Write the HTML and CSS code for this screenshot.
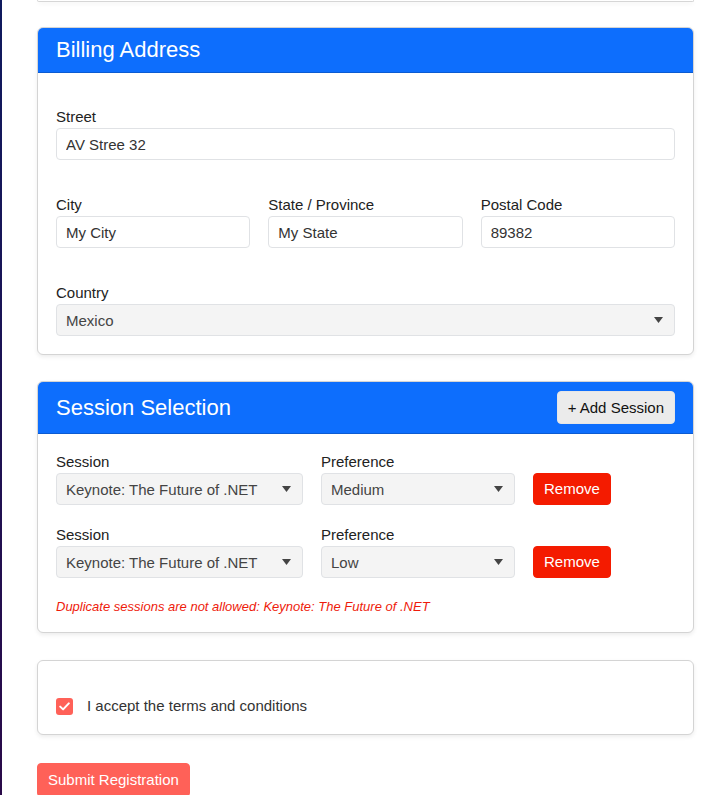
FILE: index.html
```html
<!DOCTYPE html>
<html lang="en">
<head>
<meta charset="utf-8">
<title>Registration</title>
<link rel="stylesheet" href="styles.css">
</head>
<body>
<div class="layout">
  <div class="sidebar"></div>
  <main class="main">
    <div class="card-prev"></div>

    <section class="card">
      <div class="card-header"><h2 class="card-title">Billing Address</h2></div>
      <div class="card-body spaced">
        <div class="field">
          <label class="label" for="street">Street</label>
          <input class="input" id="street" value="AV Stree 32">
        </div>
        <div class="field grid3">
          <div>
            <label class="label" for="city">City</label>
            <input class="input" id="city" value="My City">
          </div>
          <div>
            <label class="label" for="state">State / Province</label>
            <input class="input" id="state" value="My State">
          </div>
          <div>
            <label class="label" for="zip">Postal Code</label>
            <input class="input" id="zip" value="89382">
          </div>
        </div>
        <div class="field">
          <label class="label" for="country">Country</label>
          <div class="select-wrap">
            <select class="select" id="country"><option>Mexico</option></select>
            <svg class="caret" width="9" height="6" viewBox="0 0 9 6"><path d="M0 0H9L4.5 6Z" fill="#444"/></svg>
          </div>
        </div>
      </div>
    </section>

    <section class="card">
      <div class="card-header header-row">
        <h2 class="card-title">Session Selection</h2>
        <button class="btn btn-light" type="button">+ Add Session</button>
      </div>
      <div class="card-body">
        <div class="session-row">
          <div>
            <label class="label">Session</label>
            <div class="select-wrap">
              <select class="select"><option>Keynote: The Future of .NET</option></select>
              <svg class="caret" width="9" height="6" viewBox="0 0 9 6"><path d="M0 0H9L4.5 6Z" fill="#444"/></svg>
            </div>
          </div>
          <div>
            <label class="label">Preference</label>
            <div class="select-wrap">
              <select class="select"><option>Medium</option></select>
              <svg class="caret" width="9" height="6" viewBox="0 0 9 6"><path d="M0 0H9L4.5 6Z" fill="#444"/></svg>
            </div>
          </div>
          <div><button class="btn btn-danger" type="button">Remove</button></div>
        </div>
        <div class="session-row">
          <div>
            <label class="label">Session</label>
            <div class="select-wrap">
              <select class="select"><option>Keynote: The Future of .NET</option></select>
              <svg class="caret" width="9" height="6" viewBox="0 0 9 6"><path d="M0 0H9L4.5 6Z" fill="#444"/></svg>
            </div>
          </div>
          <div>
            <label class="label">Preference</label>
            <div class="select-wrap">
              <select class="select"><option>Low</option></select>
              <svg class="caret" width="9" height="6" viewBox="0 0 9 6"><path d="M0 0H9L4.5 6Z" fill="#444"/></svg>
            </div>
          </div>
          <div><button class="btn btn-danger" type="button">Remove</button></div>
        </div>
        <p class="error">Duplicate sessions are not allowed: Keynote: The Future of .NET</p>
      </div>
    </section>

    <section class="card card-terms">
      <div class="card-body spaced">
        <label class="check">
          <span class="check-box">
            <svg width="11" height="9" viewBox="0 0 11 9"><path d="M1.2 4.6L4.1 7.4L9.8 1.4" fill="none" stroke="#fff" stroke-width="2" stroke-linecap="round" stroke-linejoin="round"/></svg>
          </span>
          <span class="check-text">I accept the terms and conditions</span>
        </label>
      </div>
    </section>

    <button class="btn btn-submit" type="submit">Submit Registration</button>
  </main>
</div>
</body>
</html>
```

FILE: styles.css
```css
* { box-sizing: border-box; }

html, body {
  margin: 0;
  padding: 0;
  background: #fff;
}

body {
  font-family: "Liberation Sans", Arial, Helvetica, sans-serif;
  font-size: 15px;
  line-height: 20px;
  color: #212529;
}

.layout {
  display: flex;
  height: 795px;
  overflow: hidden;
}

.sidebar {
  width: 2px;
  flex: none;
  background: linear-gradient(180deg, #0f1a5e 0%, #2a0a49 100%);
}

.main {
  flex: 1;
  padding: 0 26px 0 35px;
  min-width: 0;
}

.card-prev {
  height: 2px;
  border: 1px solid #d6d6d6;
  border-top: 0;
  border-radius: 0 0 6px 6px;
  box-shadow: 0 2px 4px rgba(0, 0, 0, 0.06);
  margin-bottom: 25px;
}

.card {
  border: 1px solid #d4d4d4;
  border-radius: 6px;
  box-shadow: 0 2px 4px rgba(0, 0, 0, 0.075);
  margin-bottom: 26px;
  background: #fff;
}

.card-terms {
  margin-top: 27px;
  margin-bottom: 28px;
}

.card-header {
  background: #0d6efd;
  color: #fff;
  padding: 10px 18px;
  border-bottom: 1px solid #0b5bd2;
  border-radius: 5px 5px 0 0;
}

.header-row {
  display: flex;
  align-items: center;
  justify-content: space-between;
  padding: 9px 18px;
}

.card-title {
  margin: 0;
  font-size: 22px;
  line-height: 24px;
  font-weight: normal;
}

.card-body {
  padding: 19px 18px 18px;
}

.card-body.spaced {
  padding-top: 35px;
}

.field {
  margin-bottom: 36px;
}

.field:last-child {
  margin-bottom: 0;
}

.grid3 {
  display: grid;
  grid-template-columns: repeat(3, 1fr);
  gap: 18px;
}

.label {
  display: block;
  line-height: 18px;
  margin-bottom: 2px;
  color: #222;
}

.input,
.select {
  display: block;
  width: 100%;
  height: 32px;
  padding: 0 9px;
  border: 1px solid #e0e2e5;
  border-radius: 4px;
  font-family: inherit;
  font-size: 15px;
  color: #333;
  background: #fff;
  outline: none;
  margin: 0;
}

.select {
  -webkit-appearance: none;
  appearance: none;
  background: #f4f4f4;
  color: #444;
  padding-right: 30px;
}

.select-wrap {
  position: relative;
}

.caret {
  position: absolute;
  right: 12px;
  top: 13px;
  pointer-events: none;
}

.session-row {
  display: grid;
  grid-template-columns: 247px 194px auto;
  gap: 18px;
  align-items: end;
  margin-bottom: 21px;
}

.btn {
  font-family: inherit;
  font-size: 15px;
  line-height: 20px;
  border: 1px solid transparent;
  border-radius: 4px;
  cursor: pointer;
  margin: 0;
}

.btn-light {
  background: #ebebeb;
  border-color: #e6e6e6;
  color: #111;
  height: 33px;
  padding: 0 10px;
}

.btn-danger {
  background: #f41b00;
  border-color: #f41b00;
  color: #fff;
  height: 32px;
  padding: 0 10px;
}

.btn-submit {
  background: #ff6158;
  border-color: #ff6158;
  color: #fff;
  padding: 6px 10px;
}

.error {
  margin: 0;
  font-size: 13px;
  line-height: 15px;
  font-style: italic;
  color: #ee1b0b;
}

.check {
  display: flex;
  align-items: center;
  gap: 14px;
  height: 20px;
}

.check-box {
  width: 17px;
  height: 17px;
  border-radius: 3px;
  background: #ff6158;
  display: flex;
  align-items: center;
  justify-content: center;
  margin-top: 1px;
}

.check-text {
  color: #333;
}
```
